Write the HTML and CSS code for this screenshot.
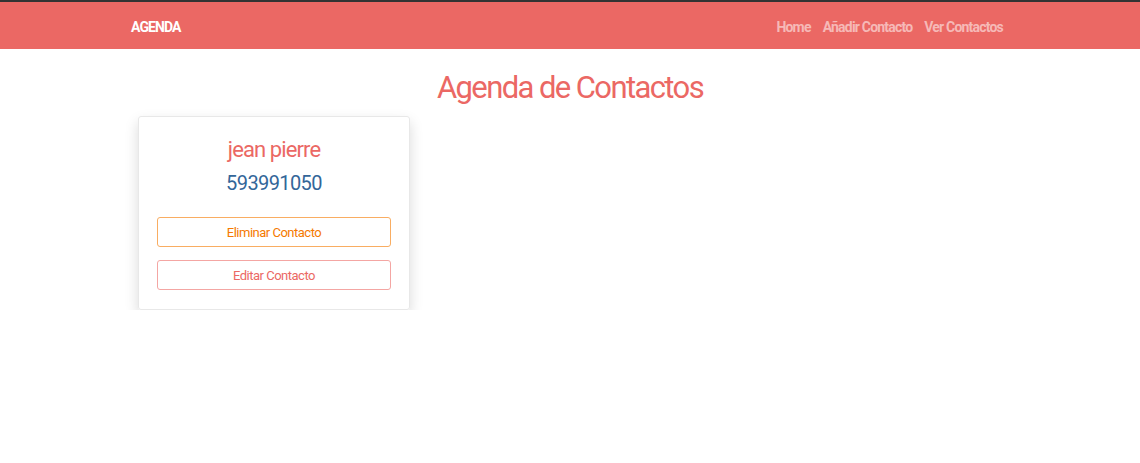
FILE: index.html
```html
<!DOCTYPE html>
<html lang="es">
<head>
<meta charset="utf-8">
<title>Agenda</title>
<link rel="stylesheet" href="styles.css">
</head>
<body>
<nav class="navbar">
  <div class="nav-inner">
    <a class="brand" href="#">AGENDA</a>
    <ul class="nav-links">
      <li><a href="#">Home</a></li>
      <li><a href="#">Añadir Contacto</a></li>
      <li><a href="#">Ver Contactos</a></li>
    </ul>
  </div>
</nav>
<main class="main">
  <h1 class="title">Agenda de Contactos</h1>
  <div class="cards">
    <div class="card">
      <h3 class="name">jean pierre</h3>
      <p class="phone">593991050</p>
      <button class="btn btn-warning">Eliminar Contacto</button>
      <button class="btn btn-primary">Editar Contacto</button>
    </div>
  </div>
</main>
</body>
</html>
```

FILE: styles.css
```css
* { box-sizing: border-box; }
html, body {
  margin: 0;
  padding: 0;
  background: #fff;
  font-family: Roboto, "Liberation Sans", sans-serif;
}
.navbar {
  border-top: 2px solid #333;
  background: #eb6864;
  height: 49px;
}
.nav-inner {
  display: flex;
  align-items: center;
  justify-content: space-between;
  height: 100%;
  padding: 2px 137px 0 131px;
}
.brand {
  color: #fff;
  font-weight: bold;
  font-size: 14px;
  letter-spacing: -0.9px;
  text-decoration: none;
}
.nav-links {
  display: flex;
  gap: 12px;
  list-style: none;
  margin: 0;
  padding: 0;
}
.nav-links a {
  color: #f6b9b7;
  font-weight: bold;
  font-size: 14px;
  letter-spacing: -0.8px;
  text-decoration: none;
}
.title {
  margin: 19px 0 0;
  text-align: center;
  color: #eb6864;
  font-weight: normal;
  font-size: 31px;
  letter-spacing: -1.6px;
  line-height: 40px;
}
.cards {
  display: flex;
  padding: 8px 0 0 138px;
}
.card {
  width: 272px;
  height: 194px;
  border: 1px solid #e8e8e8;
  border-radius: 3px;
  box-shadow: 0 6px 14px rgba(0,0,0,0.15);
  padding: 19px 18px 0;
  display: flex;
  flex-direction: column;
  align-items: stretch;
  text-align: center;
}
.name {
  margin: 0;
  color: #eb6864;
  font-weight: normal;
  font-size: 22px;
  letter-spacing: -0.9px;
  line-height: 28px;
}
.phone {
  margin: 6px 0 0;
  color: #336699;
  font-size: 20px;
  letter-spacing: -0.6px;
  line-height: 26px;
}
.btn {
  font-family: inherit;
  background: #fff;
  border-radius: 3px;
  height: 30px;
  font-size: 13px;
  letter-spacing: -0.5px;
  font-weight: normal;
  padding: 0;
  cursor: pointer;
}
.btn-warning {
  margin-top: 21px;
  color: #f57a00;
  border: 1px solid #f9ad62;
}
.btn-primary {
  margin-top: 13px;
  color: #eb6864;
  border: 1px solid #f4a6a3;
}
```
